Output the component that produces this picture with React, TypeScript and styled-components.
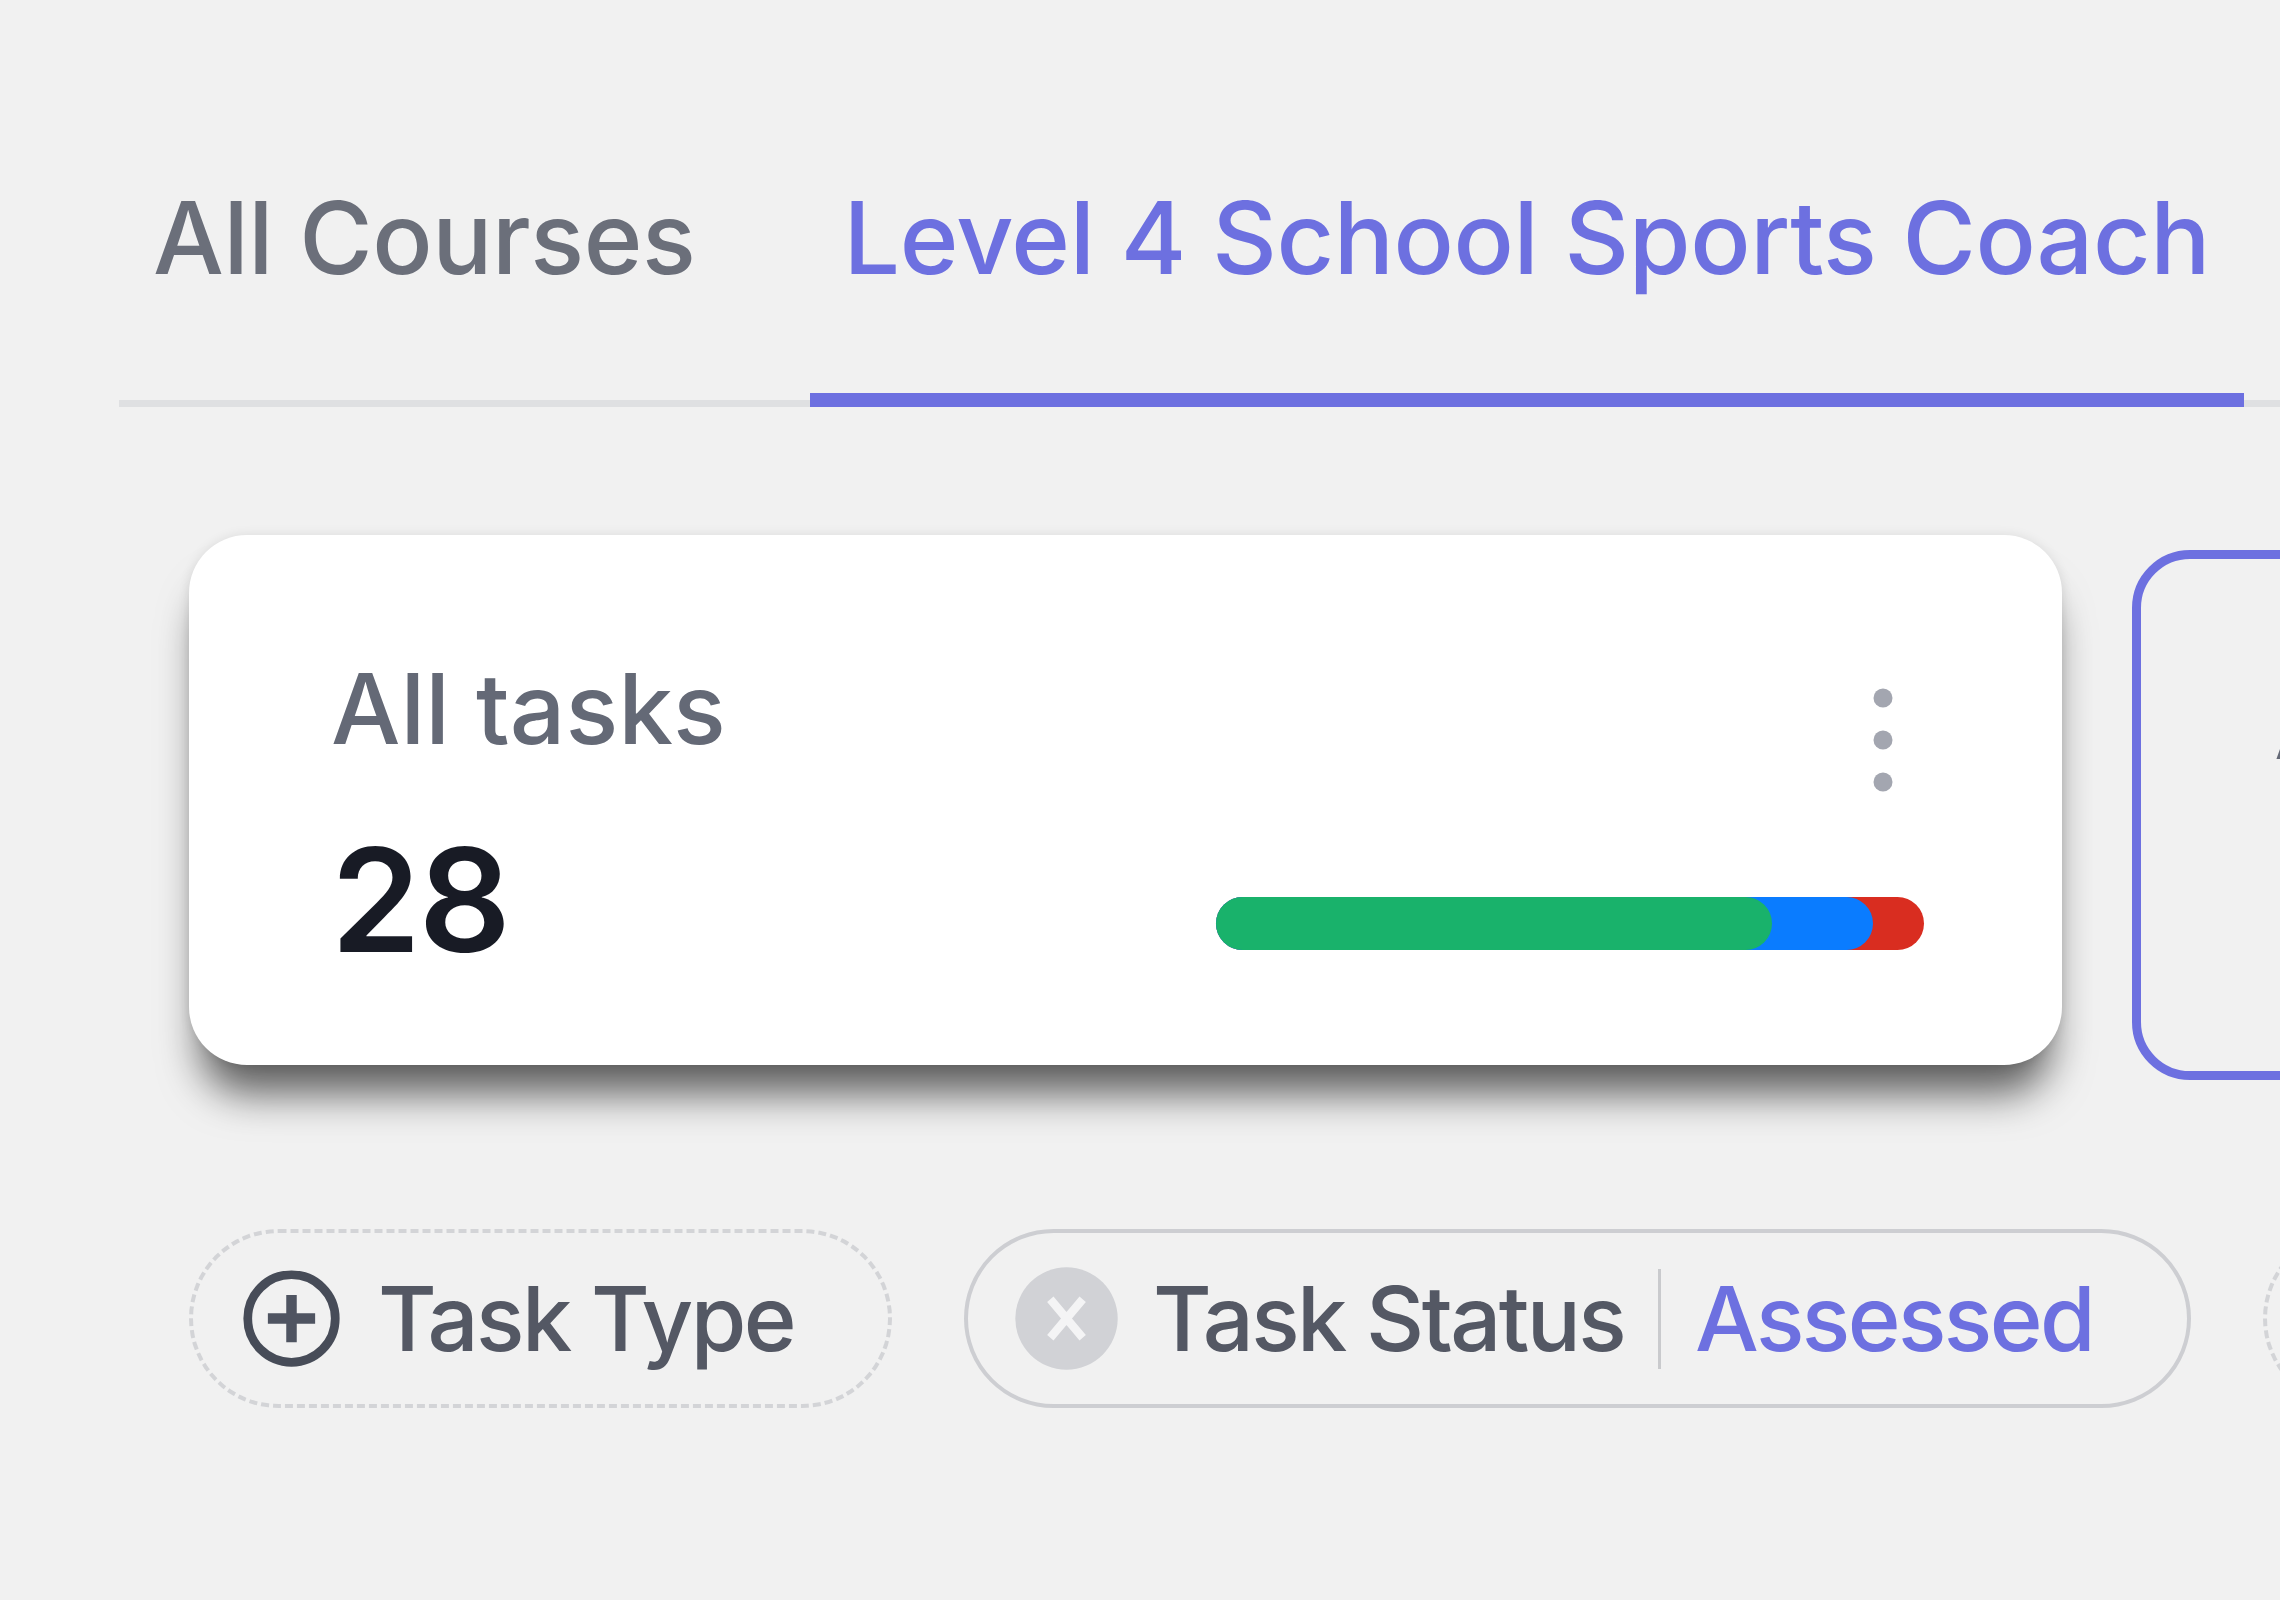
import { FC, ReactElement } from "react";
import styled, { createGlobalStyle } from "styled-components";

/*
    ====================================================== [Styles]======================================================
*/

const GlobalStyle = createGlobalStyle`
  html, body {
    margin: 0;
    padding: 0;
    background: #f1f1f1;
  }
  * {
    box-sizing: border-box;
  }
`;

const Page = styled.div`
  width: 2280px;
  min-height: 1600px;
  padding: 188px 0 0 119px;
  overflow: hidden;
  background: #f1f1f1;
  font-family: Inter, "Noto Sans", "Liberation Sans", sans-serif;
`;

const TabList = styled.div`
  display: flex;
  gap: 80px;
  border-bottom: 7px solid #dfe0e2;
`;

const Tab = styled.div<{ $active?: boolean }>`
  flex-shrink: 0;
  white-space: nowrap;
  font-size: 100px;
  line-height: 1;
  font-weight: 500;
  letter-spacing: -0.4px;
  padding: 0 34px 105px;
  margin-bottom: -7px;
  color: ${(p) => (p.$active ? "#6d70e0" : "#6b6f7a")};
  border-bottom: 14px solid ${(p) => (p.$active ? "#6d70e0" : "transparent")};
`;

const CardsRow = styled.div`
  display: flex;
  gap: 70px;
  margin-top: 143px;
  padding-left: 70px;
`;

const Card = styled.div<{ $raised?: boolean; $selected?: boolean }>`
  flex-shrink: 0;
  width: 1873px;
  height: 530px;
  border-radius: 58px;
  display: flex;
  flex-direction: column;
  padding: ${(p) => (p.$selected ? "116px 129px 0 133px" : "125px 138px 0 142px")};
  background: ${(p) => (p.$selected ? "transparent" : "#ffffff")};
  border: ${(p) => (p.$selected ? "9px solid #6d70e0" : "none")};
  transform: ${(p) => (p.$raised ? "translateY(-15px)" : "none")};
  box-shadow: ${(p) =>
    p.$raised
      ? "0 40px 42px -12px rgba(0, 0, 0, 0.62), 0 0 12px rgba(0, 0, 0, 0.09)"
      : "none"};
`;

const CardHeader = styled.div`
  display: flex;
  justify-content: space-between;
  align-items: flex-start;
`;

const CardTitle = styled.div`
  font-size: 98px;
  line-height: 1;
  font-weight: 500;
  color: #646976;
  white-space: nowrap;
`;

const Kebab = styled.svg`
  margin-top: 28px;
  margin-right: 31px;
`;

const CardBody = styled.div`
  display: flex;
  justify-content: space-between;
  align-items: flex-start;
  margin-top: 36px;
`;

const CardNumber = styled.div`
  font-size: 144px;
  line-height: 1;
  font-weight: 600;
  letter-spacing: -2px;
  color: #181b25;
`;

const Bar = styled.div`
  position: relative;
  width: 708px;
  height: 53px;
  margin-top: 69px;
`;

const BarSegment = styled.div<{ $color: string }>`
  position: absolute;
  left: 0;
  top: 0;
  height: 100%;
  border-radius: 999px;
  background: ${(p) => p.$color};
`;

const FilterRow = styled.div`
  display: flex;
  gap: 72px;
  margin-top: 149px;
  padding-left: 70px;
`;

const Chip = styled.div<{ $dashed?: boolean }>`
  flex-shrink: 0;
  display: flex;
  align-items: center;
  gap: 34px;
  height: 179px;
  padding: 0 94px 0 46px;
  border-radius: 999px;
  border: 4px ${(p) => (p.$dashed ? "dashed #d3d4d7" : "solid #cdced2")};
  white-space: nowrap;
`;

const ChipLabel = styled.span<{ $accent?: boolean }>`
  font-size: 90px;
  line-height: 1;
  font-weight: 500;
  letter-spacing: -2.6px;
  color: ${(p) => (p.$accent ? "#6d70e0" : "#545864")};
`;

const ChipDivider = styled.span`
  width: 3px;
  height: 100px;
  background: #c9cacd;
`;

/*
    ====================================================== [Icons]======================================================
*/

const PlusCircle: FC = (): ReactElement => (
  <svg width="105" height="105" viewBox="0 0 24 24" fill="none">
    <circle cx="12" cy="12" r="10" stroke="#474c58" strokeWidth="2" />
    <path d="M6.6 12h10.8M12 6.6v10.8" stroke="#4f5461" strokeWidth="2.4" />
  </svg>
);

const ClearCircle: FC = (): ReactElement => (
  <svg width="105" height="105" viewBox="0 0 24 24" fill="none">
    <circle cx="12" cy="12" r="11.7" fill="#d1d2d6" />
    <path d="M8.3 7.6l7.4 8.8M15.7 7.6l-7.4 8.8" stroke="#f4f4f5" strokeWidth="1.9" />
  </svg>
);

const KebabIcon: FC = (): ReactElement => (
  <Kebab width="20" height="104" viewBox="0 0 20 104">
    <circle cx="10" cy="10" r="9.5" fill="#a3a6b0" />
    <circle cx="10" cy="52" r="9.5" fill="#a3a6b0" />
    <circle cx="10" cy="94" r="9.5" fill="#a3a6b0" />
  </Kebab>
);

/*
    ====================================================== [Configs]======================================================
*/

const TOTAL = 28;
const SEGMENTS = [
  { color: "#d92d20", upTo: 28 },
  { color: "#0a7cff", upTo: 26 },
  { color: "#19b26b", upTo: 22 },
];

/*
    ====================================================== [App]======================================================
*/

const App: FC = (): ReactElement => {
  return (
    <Page>
      <GlobalStyle />
      <TabList>
        <Tab>All Courses</Tab>
        <Tab $active>Level 4 School Sports Coach</Tab>
      </TabList>

      <CardsRow>
        <Card $raised>
          <CardHeader>
            <CardTitle>All tasks</CardTitle>
            <KebabIcon />
          </CardHeader>
          <CardBody>
            <CardNumber>{TOTAL}</CardNumber>
            <Bar>
              {SEGMENTS.map((seg) => (
                <BarSegment
                  key={seg.color}
                  $color={seg.color}
                  style={{ width: `${(seg.upTo / TOTAL) * 100}%` }}
                />
              ))}
            </Bar>
          </CardBody>
        </Card>
        <Card $selected>
          <CardHeader>
            <CardTitle>Assessed</CardTitle>
          </CardHeader>
          <CardBody>
            <CardNumber>22</CardNumber>
          </CardBody>
        </Card>
      </CardsRow>

      <FilterRow>
        <Chip $dashed>
          <PlusCircle />
          <ChipLabel>Task Type</ChipLabel>
        </Chip>
        <Chip>
          <ClearCircle />
          <ChipLabel>Task Status</ChipLabel>
          <ChipDivider />
          <ChipLabel $accent>Assessed</ChipLabel>
        </Chip>
        <Chip $dashed>
          <PlusCircle />
          <ChipLabel>Learner</ChipLabel>
        </Chip>
      </FilterRow>
    </Page>
  );
};

export default App;
